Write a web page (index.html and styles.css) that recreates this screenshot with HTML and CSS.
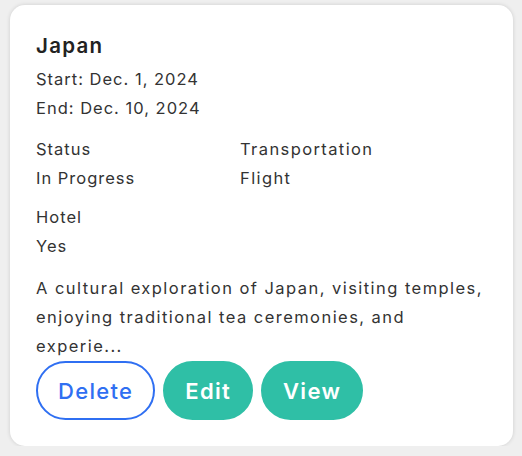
FILE: index.html
```html
<!DOCTYPE html>
<html>
<head>
<meta charset="utf-8">
<link rel="stylesheet" href="styles.css">
</head>
<body>
<div class="card">
  <h2 class="title">Japan</h2>
  <p class="line">Start: Dec. 1, 2024</p>
  <p class="line">End: Dec. 10, 2024</p>
  <div class="grid">
    <div class="field">
      <div class="line">Status</div>
      <div class="line">In Progress</div>
    </div>
    <div class="field">
      <div class="line">Transportation</div>
      <div class="line">Flight</div>
    </div>
  </div>
  <div class="field hotel">
    <div class="line">Hotel</div>
    <div class="line">Yes</div>
  </div>
  <p class="desc">A cultural exploration of Japan, visiting temples, enjoying traditional tea ceremonies, and experie...</p>
  <div class="actions">
    <button class="btn btn-outline">Delete</button>
    <button class="btn btn-fill">Edit</button>
    <button class="btn btn-fill">View</button>
  </div>
</div>
</body>
</html>
```
FILE: styles.css
```css
html, body {
  margin: 0;
  padding: 0;
  background: #efefef;
}
body {
  padding: 5px 9px 0 10px;
  font-family: "Inter", "Noto Sans", sans-serif;
  color: #333;
}
.card {
  background: #fff;
  border-radius: 15px;
  box-shadow: 0 0 4px rgba(0,0,0,0.14);
  padding: 26px;
}
.title {
  margin: 0;
  font-size: 20.5px;
  font-weight: 600;
  letter-spacing: 1.3px;
  line-height: 30px;
  color: #222;
}
.line {
  margin: 0;
  font-size: 16.5px;
  letter-spacing: 1px;
  line-height: 29px;
}
.title + .line { margin-top: 4px; }
.grid {
  display: grid;
  grid-template-columns: 204px auto;
  margin-top: 12px;
}
.grid .field + .field .line { letter-spacing: 1.4px; }
.hotel { margin-top: 10px; }
.desc {
  margin: 13px 0 0 0;
  font-size: 16.5px;
  letter-spacing: 1.45px;
  line-height: 29px;
}
.actions {
  display: flex;
  gap: 8px;
}
.btn {
  box-sizing: border-box;
  height: 59px;
  border-radius: 30px;
  font-family: inherit;
  font-size: 22px;
  font-weight: 600;
  letter-spacing: 1.3px;
  padding: 0 20px;
  border: 2px solid #2fbfa6;
  cursor: pointer;
}
.btn-outline {
  background: #fff;
  border-color: #2f6ff2;
  color: #2f6ff2;
  font-weight: 500;
}
.btn-fill {
  background: #2fbfa6;
  color: #fff;
}
```
